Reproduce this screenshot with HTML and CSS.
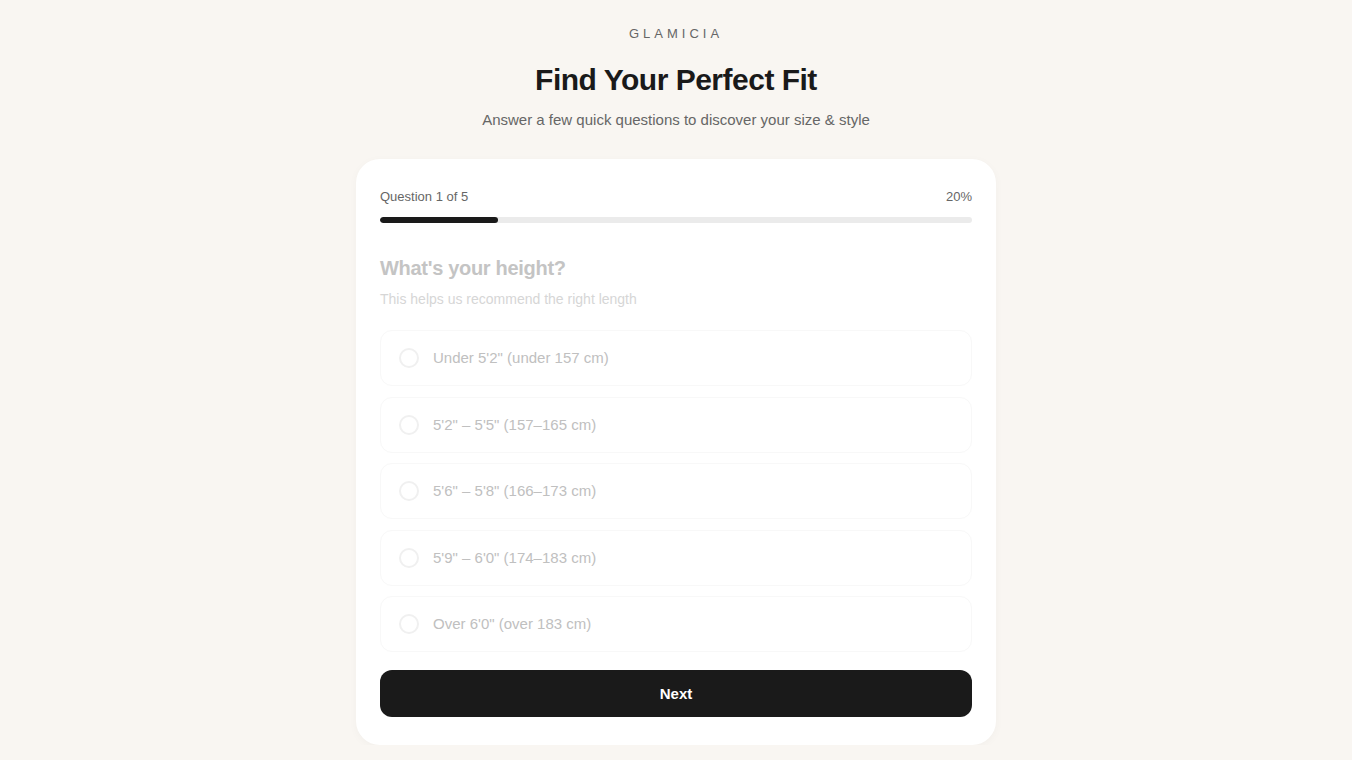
FILE: index.html
```html
<!DOCTYPE html>
<html lang="en">
<head>
<meta charset="utf-8">
<title>Glamicia – Find Your Perfect Fit</title>
<link rel="stylesheet" href="styles.css">
</head>
<body>
<main class="page">
  <div class="brand">GLAMICIA</div>
  <h1 class="title">Find Your Perfect Fit</h1>
  <p class="subtitle">Answer a few quick questions to discover your size &amp; style</p>

  <section class="card">
    <div class="progress-head">
      <span>Question 1 of 5</span>
      <span>20%</span>
    </div>
    <div class="progress-track"><div class="progress-fill" style="width:20%"></div></div>

    <div class="question">
      <h2 class="q-title">What's your height?</h2>
      <p class="q-sub">This helps us recommend the right length</p>
      <div class="options">
        <label class="option"><span class="radio"></span><span class="opt-text">Under 5'2" (under 157 cm)</span></label>
        <label class="option"><span class="radio"></span><span class="opt-text">5'2" – 5'5" (157–165 cm)</span></label>
        <label class="option"><span class="radio"></span><span class="opt-text">5'6" – 5'8" (166–173 cm)</span></label>
        <label class="option"><span class="radio"></span><span class="opt-text">5'9" – 6'0" (174–183 cm)</span></label>
        <label class="option"><span class="radio"></span><span class="opt-text">Over 6'0" (over 183 cm)</span></label>
      </div>
    </div>

    <button class="next">Next</button>
  </section>
</main>
</body>
</html>
```

FILE: styles.css
```css
* { box-sizing: border-box; }
html, body { margin: 0; padding: 0; }
body {
  background: #f9f6f2;
  font-family: "Liberation Sans", Arial, sans-serif;
  color: #1a1a1a;
}
.page {
  display: flex;
  flex-direction: column;
  align-items: center;
  padding-top: 26px;
}
.brand {
  font-size: 13px;
  line-height: 16px;
  letter-spacing: 4px;
  color: #666;
}
.title {
  margin: 18px 0 0;
  font-size: 30px;
  line-height: 40px;
  font-weight: 700;
  letter-spacing: -0.5px;
  color: #1a1a1a;
}
.subtitle {
  margin: 10px 0 0;
  font-size: 15px;
  line-height: 20px;
  color: #666;
}
.card {
  margin-top: 29px;
  width: 640px;
  background: #fff;
  border-radius: 24px;
  padding: 29px 24px 28px;
  box-shadow: 0 2px 10px rgba(0,0,0,0.03);
}
.progress-head {
  display: flex;
  justify-content: space-between;
  font-size: 13px;
  line-height: 18px;
  color: #666;
}
.progress-track {
  margin-top: 11px;
  height: 6px;
  border-radius: 3px;
  background: #ebebeb;
  overflow: hidden;
}
.progress-fill {
  height: 100%;
  background: #1a1a1a;
  border-radius: 3px;
}
.question {
  margin-top: 31px;
}
.q-title {
  margin: 0;
  font-size: 20px;
  line-height: 28px;
  font-weight: 700;
  letter-spacing: -0.3px;
  color: #c4c4c4;
}
.q-sub {
  margin: 7px 0 0;
  font-size: 14px;
  line-height: 20px;
  color: #d6d6d6;
}
.options {
  margin-top: 21px;
  display: flex;
  flex-direction: column;
  gap: 10.5px;
}
.option {
  display: flex;
  align-items: center;
  gap: 14px;
  height: 56px;
  padding: 0 18px;
  border: 1px solid #f8f8f8;
  border-radius: 12px;
}
.radio {
  width: 20px;
  height: 20px;
  border-radius: 50%;
  border: 2px solid #f0f0f0;
  flex: none;
}
.opt-text {
  font-size: 15px;
  line-height: 20px;
  color: #c0c0c0;
}
.next {
  margin-top: 18px;
  width: 100%;
  height: 47px;
  border: none;
  border-radius: 12px;
  background: #1a1a1a;
  color: #fff;
  font-family: "Liberation Sans", Arial, sans-serif;
  font-size: 15px;
  font-weight: 700;
}
```
